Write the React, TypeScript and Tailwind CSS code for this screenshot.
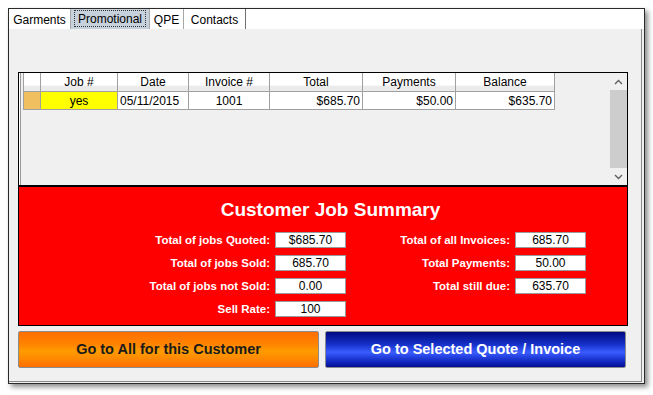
import React from "react";

const headCell =
  "h-[19px] border-r border-[#a0a0a0] flex items-center justify-center text-[12px] text-black bg-[linear-gradient(to_bottom,#ffffff_0%,#ffffff_68%,#ebebeb_72%,#ebebeb_100%)]";
const dataCell = "h-[18px] border-r border-b border-[#a0a0a0] flex items-center text-[12px] text-black";

function Field({ label, value, labelW }: { label: string; value: string; labelW: string }) {
  return (
    <div className="flex items-center h-[16px]">
      <div className={`${labelW} text-right text-white font-bold text-[11.5px] leading-[16px] whitespace-nowrap`}>{label}</div>
      <div className="ml-[5px] w-[71px] h-[16px] border border-[#9a9a9a] bg-white flex items-center justify-center text-[12px] text-black leading-none">
        {value}
      </div>
    </div>
  );
}

export default function App() {
  return (
    <div
      className="w-[653px] h-[395px] bg-white pt-[8px] pl-[8px]"
      style={{ fontFamily: "'Liberation Sans', Arial, sans-serif" }}
    >
      <div className="w-[637px] h-[376px] border border-[#2a2a2a] bg-[#f0f0f0] flex flex-col shadow-[3px_3px_5px_rgba(0,0,0,0.45)]">
        {/* Tabs */}
        <div className="h-[20px] bg-white flex text-[12px] text-black shrink-0">
          <div className="w-[62px] border-r border-[#a8a8a8] flex items-center justify-center pt-[1px]">Garments</div>
          <div className="w-[79px] border-r border-[#a8a8a8] bg-[#c6d1dc] flex items-start justify-center pt-[1px]">
            <span className="w-[72px] h-[17px] border border-dotted border-[#333] flex items-center justify-center">
              Promotional
            </span>
          </div>
          <div className="w-[34px] border-r border-[#a8a8a8] flex items-center justify-center pt-[1px]">QPE</div>
          <div className="w-[62px] border-r border-[#707070] flex items-center justify-center pt-[1px]">Contacts</div>
        </div>

        {/* Content */}
        <div className="flex-1 mr-[2px] mb-[1px] border-r border-b border-[#8a8a8a] pl-[9px] pt-[43px]">
          <div className="w-[610px] h-[254px] border border-black flex flex-col">
            {/* Grid */}
            <div className="h-[112px] flex shrink-0">
              <div className="w-[4px] flex">
                <div className="w-[1px] bg-white" />
                <div className="w-[1px] bg-[#9a9a9a]" />
                <div className="w-[2px] bg-[#f0f0f0]" />
              </div>
              <div className="flex-1 bg-[#f0f0f0]">
                <div className="flex">
                  <div className={`${headCell} w-[18px] border-l border-b`} />
                  <div className={`${headCell} w-[77px] border-b`}>Job #</div>
                  <div className={`${headCell} w-[71px] border-b`}>Date</div>
                  <div className={`${headCell} w-[81px] border-b`}>Invoice #</div>
                  <div className={`${headCell} w-[93px] border-b`}>Total</div>
                  <div className={`${headCell} w-[93px] border-b`}>Payments</div>
                  <div className={`${headCell} w-[99px] border-b`}>Balance</div>
                </div>
                <div className="flex">
                  <div className={`${dataCell} w-[18px] border-l bg-[#f0c060]`} />
                  <div className={`${dataCell} w-[77px] bg-[#ffff00] justify-center`}>yes</div>
                  <div className={`${dataCell} w-[71px] bg-white pl-[2px]`}>05/11/2015</div>
                  <div className={`${dataCell} w-[81px] bg-white justify-center`}>1001</div>
                  <div className={`${dataCell} w-[93px] bg-white justify-end pr-[2px]`}>$685.70</div>
                  <div className={`${dataCell} w-[93px] bg-white justify-end pr-[2px]`}>$50.00</div>
                  <div className={`${dataCell} w-[99px] bg-white justify-end pr-[2px]`}>$635.70</div>
                </div>
              </div>
              {/* Scrollbar */}
              <div className="w-[17px] bg-[#f0f0f0] flex flex-col">
                <div className="h-[17px] flex items-center justify-center">
                  <svg width="9" height="6" viewBox="0 0 9 6">
                    <path d="M1 5 L4.5 1.5 L8 5" fill="none" stroke="#606060" strokeWidth="1.4" />
                  </svg>
                </div>
                <div className="flex-1 bg-[#cdcdcd]" />
                <div className="h-[17px] flex items-center justify-center">
                  <svg width="9" height="6" viewBox="0 0 9 6">
                    <path d="M1 1 L4.5 4.5 L8 1" fill="none" stroke="#606060" strokeWidth="1.4" />
                  </svg>
                </div>
              </div>
            </div>

            {/* Summary */}
            <div className="flex-1 bg-[#ff0000] border-t-2 border-black flex flex-col">
              <div className="mt-[12px] h-[22px] leading-[22px] text-center pl-[15px] text-white font-bold text-[19px]">
                Customer Job Summary
              </div>
              <div className="mt-[11px] flex">
                <div className="flex flex-col gap-[7px]">
                  <Field label="Total of jobs Quoted:" value="$685.70" labelW="w-[251px]" />
                  <Field label="Total of jobs Sold:" value="685.70" labelW="w-[251px]" />
                  <Field label="Total of jobs not Sold:" value="0.00" labelW="w-[251px]" />
                  <Field label="Sell Rate:" value="100" labelW="w-[251px]" />
                </div>
                <div className="flex flex-col gap-[7px]">
                  <Field label="Total of all Invoices:" value="685.70" labelW="w-[164px]" />
                  <Field label="Total Payments:" value="50.00" labelW="w-[164px]" />
                  <Field label="Total still due:" value="635.70" labelW="w-[164px]" />
                </div>
              </div>
            </div>
          </div>

          {/* Buttons */}
          <div className="mt-[5px] flex gap-[6px]">
            <div className="w-[301px] h-[37px] rounded-[2px] border border-[#8c8c8c] flex items-center justify-center text-[14.5px] font-bold text-[#1a1a1a] bg-[linear-gradient(to_bottom,#ff6e00_0%,#ff8400_35%,#ff9c00_55%,#ff8a00_75%,#ff6e00_100%)]">
              Go to All for this Customer
            </div>
            <div className="w-[301px] h-[37px] rounded-[2px] border border-[#8c8c8c] flex items-center justify-center text-[14.5px] font-bold text-white bg-[linear-gradient(to_bottom,#000a80_0%,#1530c8_35%,#3a5cff_58%,#1a34d0_78%,#000e96_100%)]">
              Go to Selected Quote / Invoice
            </div>
          </div>
        </div>
      </div>
    </div>
  );
}
